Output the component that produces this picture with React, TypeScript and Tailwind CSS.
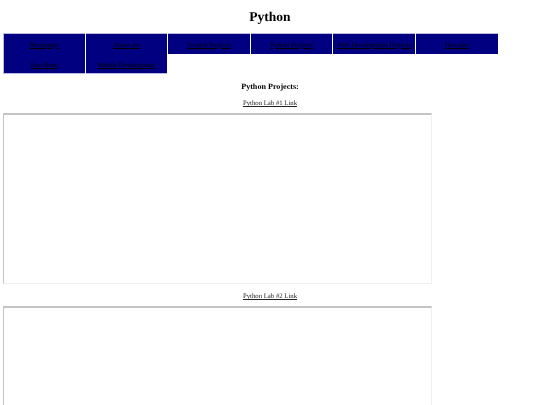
import React from 'react';

const navItems: string[] = [
  'Homepage',
  'About me',
  'Scratch Projects',
  'Python Projects',
  'Web Development Projects',
  'Hercules',
  'Ken Bone',
  'Mobile Development',
];

const LabFrame: React.FC<{ className?: string }> = ({ className = '' }) => (
  <div
    className={`ml-[3px] w-[429px] bg-white border-t-2 border-l border-b border-r border-t-[#c4c4c4] border-l-[#c4c4c4] border-b-[#f0f0f0] border-r-[#f0f0f0] ${className}`}
  />
);

const App: React.FC = () => {
  return (
    <div className="h-[405px] overflow-hidden bg-white text-black font-['Liberation_Serif',serif] [text-rendering:geometricPrecision]">
      <h1 className="pt-[9px] text-center text-[13.5px] leading-[16px] font-bold blur-[0.2px]">Python</h1>

      <nav className="mt-[8px] ml-[3px] flex flex-wrap w-[510px]">
        {navItems.map((item, i) => (
          <div key={item} className={`w-[82.6px] pr-[1px] flex ${i < 6 ? 'h-[21px]' : 'h-[20px]'}`}>
            <a
              href="#"
              className={`flex-1 flex items-center justify-center bg-[#000080] border-[#b9b9e0] text-[6.75px] leading-[9px] text-black underline whitespace-nowrap ${
                i < 6 ? 'border-t pt-[2px]' : 'border-b pt-[4px]'
              } ${i === 0 || i === 6 ? 'border-l' : ''}`}
            >
              <span className="blur-[0.2px]">{item}</span>
            </a>
          </div>
        ))}
      </nav>

      <h3 className="mt-[8px] text-center text-[8.1px] leading-[10px] font-bold blur-[0.2px]">Python Projects:</h3>
      <p className="mt-[7px] text-center text-[6.75px] leading-[9px] blur-[0.25px] text-[#222222]">
        <a href="#" className="underline">Python Lab #1 Link</a>
      </p>
      <LabFrame className="mt-[5px] h-[171px]" />
      <p className="mt-[8px] text-center text-[6.75px] leading-[9px] blur-[0.25px] text-[#222222]">
        <a href="#" className="underline">Python Lab #2 Link</a>
      </p>
      <LabFrame className="mt-[5px] h-[171px]" />
    </div>
  );
};

export default App;
